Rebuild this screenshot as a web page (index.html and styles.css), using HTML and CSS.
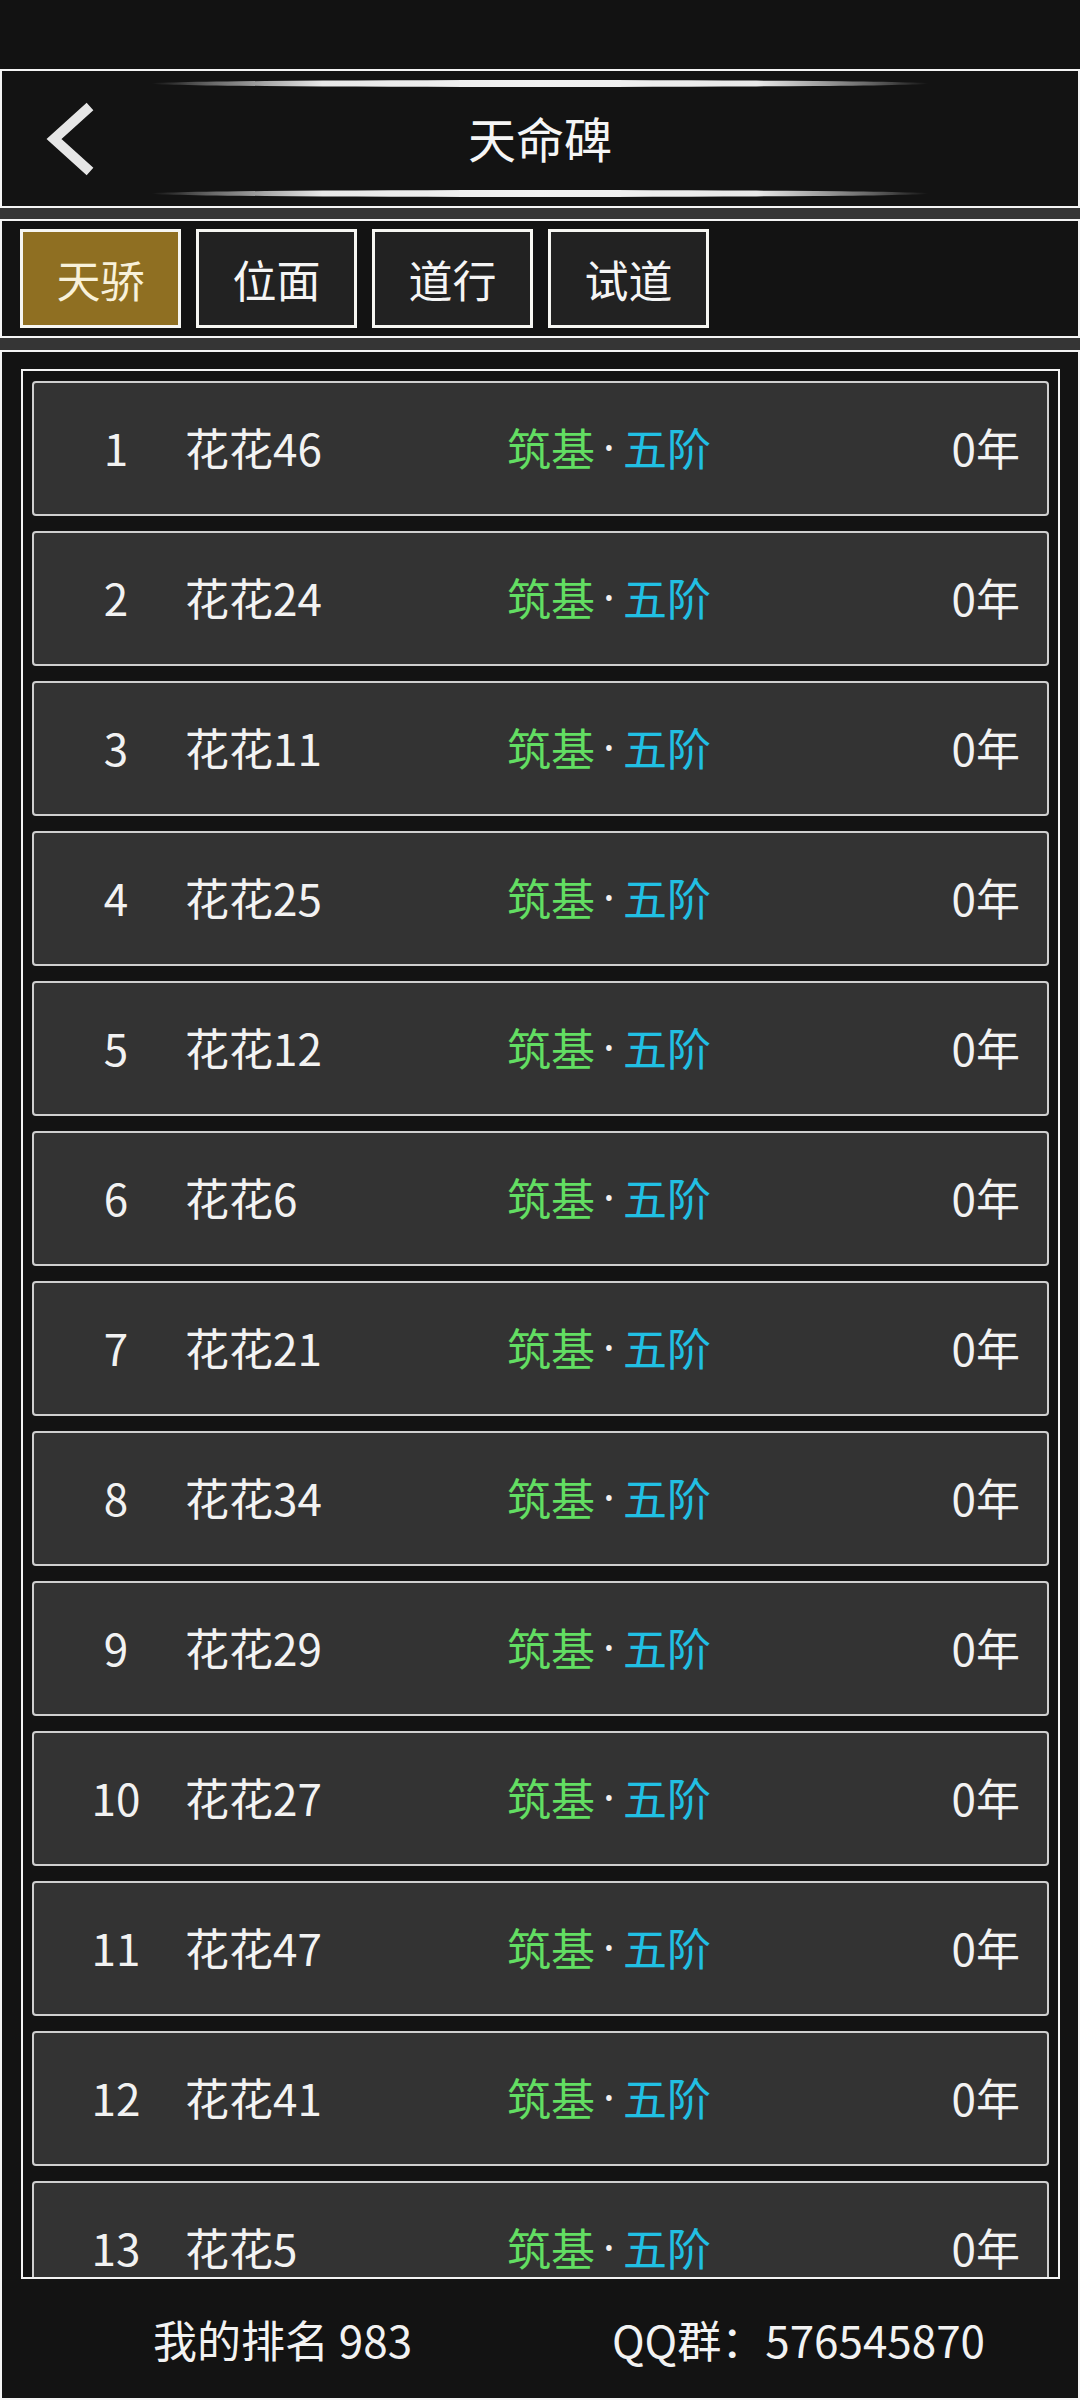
FILE: index.html
```html
<!DOCTYPE html>
<html lang="zh-CN">
<head>
<meta charset="utf-8">
<title>天命碑</title>
<link rel="stylesheet" href="styles.css">
</head>
<body>
<div class="status"></div>
<header class="header">
  <div class="back">
    <svg width="60" height="82" viewBox="0 0 60 82"><path d="M50 8.5 L14 41 L50 73.5" fill="none" stroke="#e6e6e6" stroke-width="10" stroke-linecap="butt" stroke-linejoin="miter"/></svg>
  </div>
  <div class="center">
    <div class="deco"></div>
    <div class="title">天命碑</div>
    <div class="deco"></div>
  </div>
  <div></div>
</header>
<div class="band"></div>
<nav class="tabs">
  <div class="tab active">天骄</div>
  <div class="tab">位面</div>
  <div class="tab">道行</div>
  <div class="tab">试道</div>
</nav>
<div class="band band2"></div>
<main class="board">
  <div class="list">
    <div class="row"><span class="rank">1</span><span class="name">花花46</span><span class="realm"><span class="g">筑基</span><span class="dot">·</span><span class="b">五阶</span></span><span class="year">0年</span></div>
    <div class="row"><span class="rank">2</span><span class="name">花花24</span><span class="realm"><span class="g">筑基</span><span class="dot">·</span><span class="b">五阶</span></span><span class="year">0年</span></div>
    <div class="row"><span class="rank">3</span><span class="name">花花11</span><span class="realm"><span class="g">筑基</span><span class="dot">·</span><span class="b">五阶</span></span><span class="year">0年</span></div>
    <div class="row"><span class="rank">4</span><span class="name">花花25</span><span class="realm"><span class="g">筑基</span><span class="dot">·</span><span class="b">五阶</span></span><span class="year">0年</span></div>
    <div class="row"><span class="rank">5</span><span class="name">花花12</span><span class="realm"><span class="g">筑基</span><span class="dot">·</span><span class="b">五阶</span></span><span class="year">0年</span></div>
    <div class="row"><span class="rank">6</span><span class="name">花花6</span><span class="realm"><span class="g">筑基</span><span class="dot">·</span><span class="b">五阶</span></span><span class="year">0年</span></div>
    <div class="row"><span class="rank">7</span><span class="name">花花21</span><span class="realm"><span class="g">筑基</span><span class="dot">·</span><span class="b">五阶</span></span><span class="year">0年</span></div>
    <div class="row"><span class="rank">8</span><span class="name">花花34</span><span class="realm"><span class="g">筑基</span><span class="dot">·</span><span class="b">五阶</span></span><span class="year">0年</span></div>
    <div class="row"><span class="rank">9</span><span class="name">花花29</span><span class="realm"><span class="g">筑基</span><span class="dot">·</span><span class="b">五阶</span></span><span class="year">0年</span></div>
    <div class="row"><span class="rank">10</span><span class="name">花花27</span><span class="realm"><span class="g">筑基</span><span class="dot">·</span><span class="b">五阶</span></span><span class="year">0年</span></div>
    <div class="row"><span class="rank">11</span><span class="name">花花47</span><span class="realm"><span class="g">筑基</span><span class="dot">·</span><span class="b">五阶</span></span><span class="year">0年</span></div>
    <div class="row"><span class="rank">12</span><span class="name">花花41</span><span class="realm"><span class="g">筑基</span><span class="dot">·</span><span class="b">五阶</span></span><span class="year">0年</span></div>
    <div class="row"><span class="rank">13</span><span class="name">花花5</span><span class="realm"><span class="g">筑基</span><span class="dot">·</span><span class="b">五阶</span></span><span class="year">0年</span></div>
  </div>
  <footer class="footer">
    <span>我的排名 983</span>
    <span>QQ群：576545870</span>
  </footer>
</main>
</body>
</html>
```

FILE: styles.css
```css
* { box-sizing: border-box; }
html, body {
  margin: 0;
  padding: 0;
  width: 1080px;
  height: 2400px;
  overflow: hidden;
  background: #121212;
  font-family: "Noto Sans CJK SC", "Noto Sans", sans-serif;
  color: #f2f2f2;
}
.status { height: 69px; background: #121212; }

.header {
  height: 139px;
  border: 2px solid #f4f4f4;
  background: #131313;
  display: grid;
  grid-template-columns: 1fr 778px 1fr;
  align-items: center;
}
.back {
  height: 100%;
  display: flex;
  align-items: center;
  padding-left: 38px;
}
.back svg { display: block; }
.center {
  display: flex;
  flex-direction: column;
  padding: 9px 0;
  height: 100%;
}
.deco {
  height: 7px;
  border-radius: 50%;
  background: linear-gradient(90deg, rgba(255,255,255,0) 0%, #6a6a6a 8%, #e8e8e8 22%, #f2f2f2 50%, #e8e8e8 78%, #6a6a6a 92%, rgba(255,255,255,0) 100%);
}
.title {
  flex: 1;
  display: flex;
  align-items: center;
  justify-content: center;
  font-size: 48px;
  line-height: 1;
  color: #f5f5f5;
  padding-bottom: 4px;
}

.band { height: 11px; background: #353535; }
.band2 { height: 12px; }

.tabs {
  height: 119px;
  border: 2px solid #f4f4f4;
  background: #131313;
  display: flex;
  align-items: center;
  gap: 15px;
  padding-left: 18px;
}
.tab {
  width: 161px;
  height: 99px;
  border: 3px solid #f6f6f2;
  background: #222222;
  display: flex;
  align-items: center;
  justify-content: center;
  font-size: 44px;
  line-height: 1;
  color: #f5f5f5;
}
.tab.active {
  background: #8f6f22;
  color: #f8f1da;
}

.board {
  height: 2050px;
  border: 2px solid #f4f4f4;
  background: #131313;
  display: flex;
  flex-direction: column;
}
.list {
  margin: 17px 18px 0 19px;
  height: 1910px;
  border: 2px solid #f4f4f4;
  overflow: hidden;
  padding: 10px 9px 0 9px;
  display: flex;
  flex-direction: column;
  gap: 15px;
}
.row {
  flex: 0 0 135px;
  height: 135px;
  border: 2px solid #cfcfcf;
  border-radius: 4px;
  background: #333333;
  display: flex;
  align-items: center;
  font-size: 44px;
  line-height: 1;
  padding-right: 27px;
  padding-bottom: 4px;
}
.rank {
  width: 100px;
  margin-left: 32px;
  text-align: center;
}
.name {
  width: 341px;
  padding-left: 19px;
}
.realm {
  flex: 1;
  display: flex;
  align-items: center;
}
.g { color: #62de62; }
.b { color: #21bfe3; }
.dot {
  width: 28px;
  text-align: center;
  font-family: "Noto Sans", "DejaVu Sans", sans-serif;
  color: #f2f2f2;
}
.year { text-align: right; }

.footer {
  flex: 1;
  display: flex;
  align-items: center;
  justify-content: space-between;
  padding: 0 93px 0 151px;
  font-size: 44px;
  line-height: 1;
  color: #f2f2f2;
}
```
